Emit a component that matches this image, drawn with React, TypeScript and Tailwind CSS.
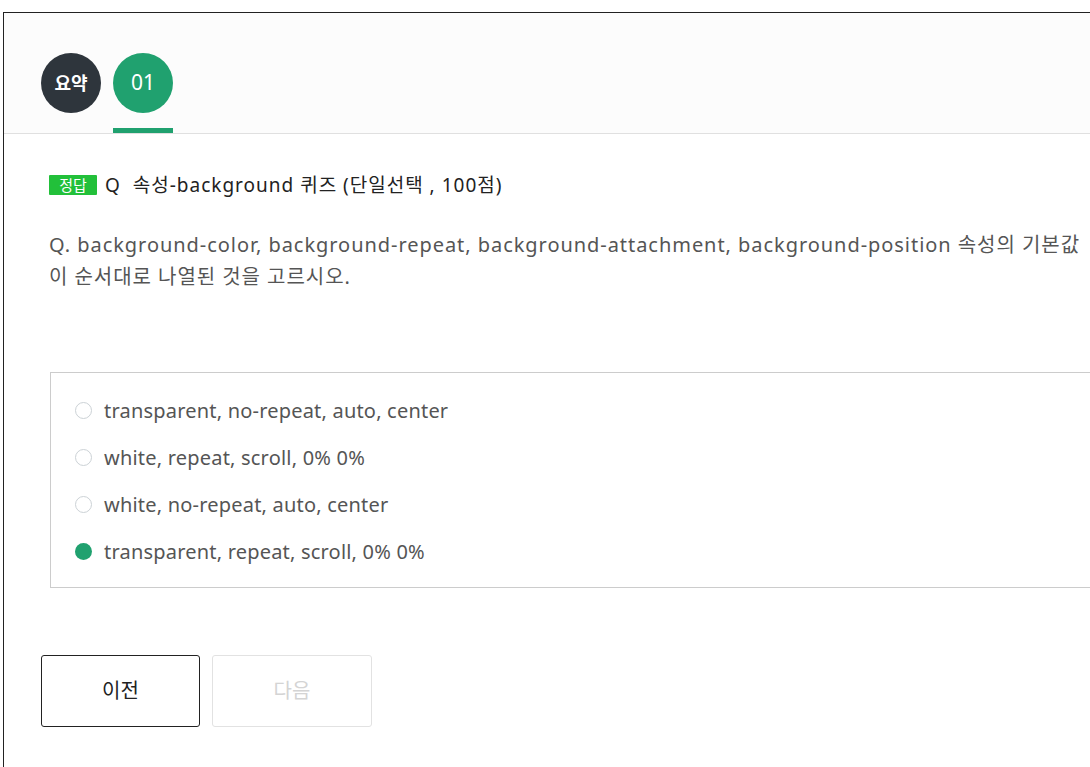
import React from 'react';

const font = { fontFamily: '"Noto Sans", "Noto Sans CJK KR", sans-serif' };

const options = [
  'transparent, no-repeat, auto, center',
  'white, repeat, scroll, 0% 0%',
  'white, no-repeat, auto, center',
  'transparent, repeat, scroll, 0% 0%',
];

export default function App() {
  return (
    <div className="w-[1090px] h-[767px] overflow-hidden bg-white pt-[12px] pl-[3px]" style={font}>
      <div className="w-[1130px] h-[800px] border border-[#222] bg-white">
        {/* tabs */}
        <div className="h-[121px] bg-[#fcfcfc] border-b border-[#e0e0e0] flex items-start gap-[12px] pl-[37px] pt-[40px]">
          <div className="flex flex-col items-center">
            <div className="w-[60px] h-[60px] rounded-full bg-[#2e353c] flex items-center justify-center text-white text-[18px] font-semibold">
              요약
            </div>
          </div>
          <div className="flex flex-col items-center">
            <div className="w-[60px] h-[60px] rounded-full bg-[#20a16f] flex items-center justify-center text-white text-[21px]">
              01
            </div>
            <div className="w-[60px] h-[5px] bg-[#20a16f] mt-[15px]"></div>
          </div>
        </div>

        {/* body */}
        <div className="pl-[45px] pt-[40px]">
          <div className="flex items-center h-[22px]">
            <span className="inline-flex items-center justify-center w-[48px] h-[20px] bg-[#22c03a] text-white text-[15px] rounded-[1px]">
              정답
            </span>
            <span className="ml-[8px] text-[19px] tracking-[1px] text-[#222]">Q&nbsp; 속성-background 퀴즈 (단일선택 , 100점)</span>
          </div>

          <p className="mt-[33px] w-[1034px] text-[20px] tracking-[0.95px] leading-[32px] text-[#555]">
            Q. background-color, background-repeat, background-attachment, background-position 속성의 기본값이 순서대로 나열된 것을 고르시오.
          </p>

          <div className="mt-[79px] ml-[1px] w-[1100px] border border-[#ccc] pt-[14px] pb-[12px] pl-[24px] flex flex-col">
            {options.map((o, i) => (
              <div key={o} className="h-[47px] flex items-center gap-[12px]">
                {i === 3 ? (
                  <span className="w-[17px] h-[17px] rounded-full bg-[#20a16f]"></span>
                ) : (
                  <span className="w-[17px] h-[17px] rounded-full border border-[#ccd2d6] bg-white"></span>
                )}
                <span className="text-[20px] tracking-[0.2px] text-[#555]">{o}</span>
              </div>
            ))}
          </div>
        </div>

        {/* buttons */}
        <div className="flex gap-[12px] pl-[37px] mt-[67px]">
          <button className="w-[159px] h-[72px] border border-[#222] rounded-[3px] bg-white text-[20px] text-[#222]">이전</button>
          <button className="w-[160px] h-[72px] border border-[#e2e2e2] rounded-[3px] bg-white text-[20px] text-[#d4d4d4]">다음</button>
        </div>
      </div>
    </div>
  );
}
